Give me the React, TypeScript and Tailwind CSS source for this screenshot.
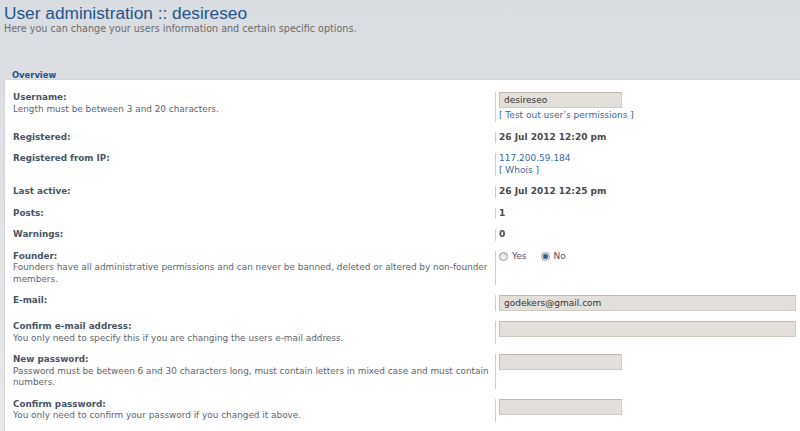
import React from "react";

const font = { fontFamily: '"DejaVu Sans", Verdana, sans-serif' };

function Input({ wide, value }: { wide?: boolean; value?: string }) {
  return (
    <div
      className={`${wide ? "w-[297px]" : "w-[123px]"} h-[16px] bg-[#e3e0db] border border-[#cfcbc4] border-t-[#bdb9b2] border-l-[#c4c0b9] pl-[4px] text-[9px] leading-[14px] text-[#333]`}
    >
      {value}
    </div>
  );
}

function Radio({ checked }: { checked?: boolean }) {
  return (
    <span className="inline-flex w-[9px] h-[9px] rounded-full border border-[#9a9a9a] bg-gradient-to-b from-[#dcdcdc] to-[#f8f8f8] items-center justify-center">
      {checked && <span className="w-[5px] h-[5px] rounded-full bg-[#2c5c8a] block" />}
    </span>
  );
}

function Row({
  label,
  desc,
  children,
}: {
  label: string;
  desc?: React.ReactNode;
  children: React.ReactNode;
}) {
  return (
    <div className="flex items-stretch mb-[10px]">
      <div className="w-[482px] shrink-0">
        <div className="font-bold text-[#4a5566] text-[8.8px]">{label}</div>
        {desc && <div className="text-[#5d6570] text-[8.9px] whitespace-nowrap">{desc}</div>}
      </div>
      <div className="border-l border-[#cccccc] pl-[3px] flex-1">{children}</div>
    </div>
  );
}

export default function App() {
  return (
    <div
      className="w-[800px] h-[431px] overflow-hidden bg-gradient-to-b from-[#d9dce1] to-[#e7e8eb] text-[9px] leading-[11.5px]"
      style={font}
    >
      <div className="pl-[4px] pt-[4px] h-[79px] flex flex-col">
        <h1
          className="text-[17.3px] leading-[19px] text-[#25548a]"
          style={{ fontFamily: '"Liberation Sans", Arial, sans-serif' }}
        >
          User administration :: desireseo
        </h1>
        <p className="text-[9.6px] leading-[11px] text-[#6b6b6b]">
          Here you can change your users information and certain specific options.
        </p>
        <div className="mt-auto pl-[8px] font-bold text-[#1f5288] text-[8.4px] leading-[10px] mb-[-1px]">
          Overview
        </div>
      </div>
      <div className="ml-[4px] bg-white border-l border-t border-[#d2d4d8] h-[352px] pl-[8px] pt-[12px]">
        <Row label="Username:" desc="Length must be between 3 and 20 characters.">
          <Input value="desireseo" />
          <div className="mt-[2px] text-[#3a6a9e]">[ Test out user’s permissions ]</div>
        </Row>
        <Row label="Registered:">
          <div className="font-bold text-[#4a4a4a]">26 Jul 2012 12:20 pm</div>
        </Row>
        <Row label="Registered from IP:">
          <div className="text-[#3a6a9e]">117.200.59.184</div>
          <div className="text-[#3a6a9e]">[ Whois ]</div>
        </Row>
        <Row label="Last active:">
          <div className="font-bold text-[#4a4a4a]">26 Jul 2012 12:25 pm</div>
        </Row>
        <Row label="Posts:">
          <div className="font-bold text-[#4a4a4a]">1</div>
        </Row>
        <Row label="Warnings:">
          <div className="font-bold text-[#4a4a4a]">0</div>
        </Row>
        <Row
          label="Founder:"
          desc={
            <>
              Founders have all administrative permissions and can never be banned, deleted or altered by non-founder
              <br />
              members.
            </>
          }
        >
          <div className="flex items-center text-[#4a5566]">
            <Radio />
            <span className="ml-[4px] mr-[14px]">Yes</span>
            <Radio checked />
            <span className="ml-[4px]">No</span>
          </div>
        </Row>
        <Row label="E-mail:">
          <Input wide value="godekers@gmail.com" />
        </Row>
        <Row label="Confirm e-mail address:" desc="You only need to specify this if you are changing the users e-mail address.">
          <Input wide />
        </Row>
        <Row
          label="New password:"
          desc={
            <>
              Password must be between 6 and 30 characters long, must contain letters in mixed case and must contain
              <br />
              numbers.
            </>
          }
        >
          <Input />
        </Row>
        <Row label="Confirm password:" desc="You only need to confirm your password if you changed it above.">
          <Input />
        </Row>
      </div>
    </div>
  );
}
